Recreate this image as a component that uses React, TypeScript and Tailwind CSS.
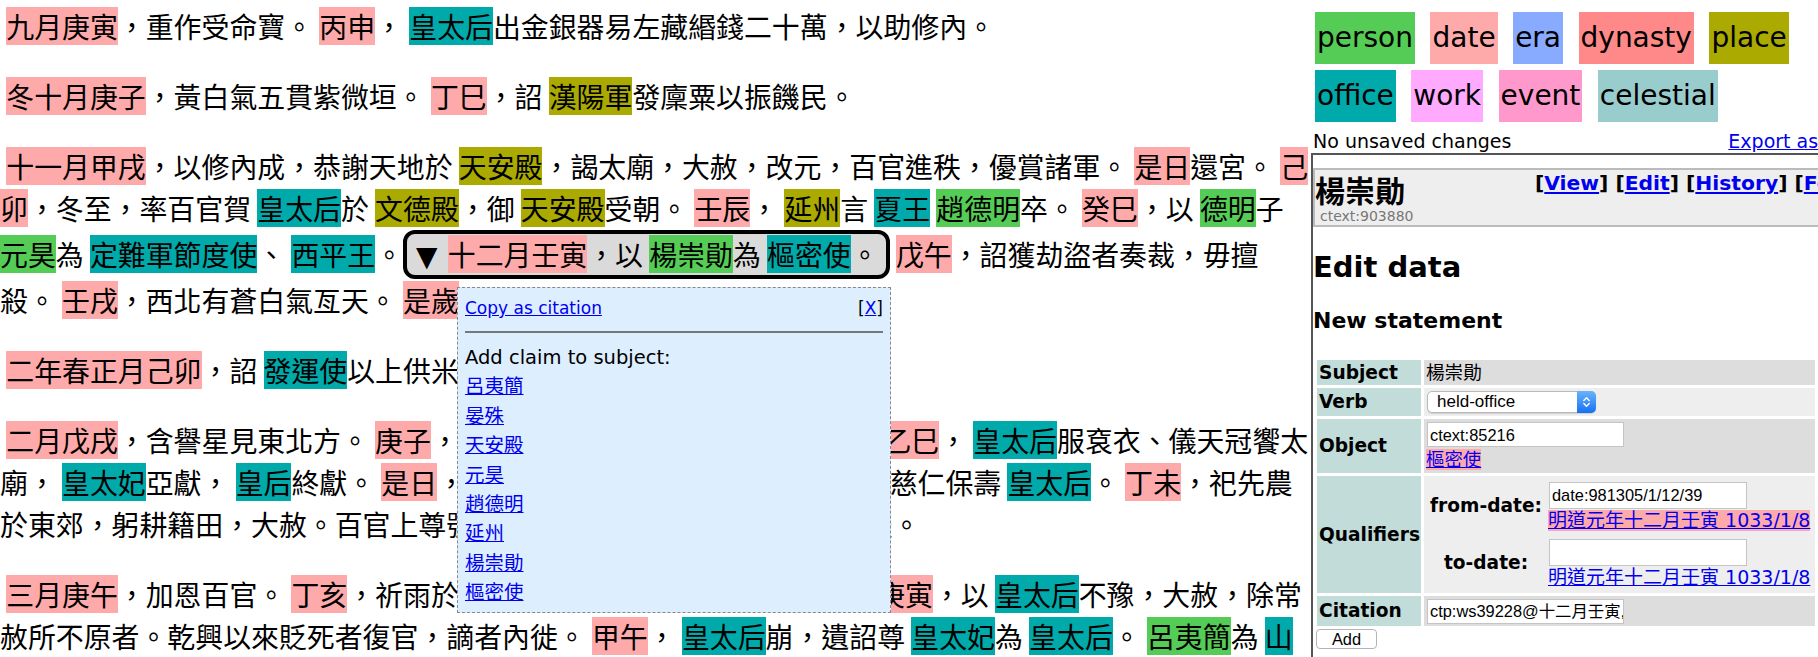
import React from "react";

const BG: Record<string, string> = {
  d: "bg-[#ffaaaa]",
  o: "bg-[#00aaaa]",
  p: "bg-[#55cc55]",
  pl: "bg-[#aaaa00]",
};

function H({ t, children }: { t: string; children: React.ReactNode }) {
  return <span className={"inline-block h-[38px] leading-[38px] " + BG[t]}>{children}</span>;
}

function seg(s: string): React.ReactNode[] {
  const out: React.ReactNode[] = [];
  const re = /\{(\w+):([^}]+)\}/g;
  let last = 0;
  let k = 0;
  let m: RegExpExecArray | null;
  while ((m = re.exec(s))) {
    if (m.index > last) out.push(s.slice(last, m.index));
    out.push(
      <H key={k++} t={m[1]}>
        {m[2]}
      </H>
    );
    last = re.lastIndex;
  }
  if (last < s.length) out.push(s.slice(last));
  return out;
}

function L({ s }: { s: string }) {
  return <div className="h-[42px] leading-[42px] whitespace-pre">{seg(s)}</div>;
}

function P({ children }: { children: React.ReactNode }) {
  return <div className="mb-[28px]">{children}</div>;
}

const LINK = "text-[#0000ee] underline";
const SANS = "font-['Liberation_Sans','Noto_Sans_CJK_TC',sans-serif]";

function Field({ v, w = "w-[197px]", h = "h-[25px]" }: { v: string; w?: string; h?: string }) {
  return (
    <div
      className={
        "ml-[1px] bg-white border border-[#c4c4c4] pl-[2px] overflow-hidden whitespace-nowrap flex items-center text-[16.4px] " +
        SANS +
        " " +
        w +
        " " +
        h
      }
    >
      {v}
    </div>
  );
}

function Tag({ label, bg }: { label: string; bg: string }) {
  return <span className={"h-[52px] px-[2px] leading-[52px] " + bg}>{label}</span>;
}

export default function App() {
  const claims = ["呂夷簡", "晏殊", "天安殿", "元昊", "趙德明", "延州", "楊崇勛", "樞密使"];
  return (
    <div className="flex w-[1818px] h-[657px] overflow-hidden bg-white text-black font-['DejaVu_Sans','Noto_Sans_CJK_TC',sans-serif] text-[19px]">
      {/* Left: text */}
      <div className="relative w-[1311px] shrink-0 overflow-hidden pt-[5px] font-['Noto_Sans_CJK_TC',sans-serif] text-[27.9px]">
        <P>
          <L s=" {d:九月庚寅}，重作受命寶。 {d:丙申}， {o:皇太后}出金銀器易左藏緡錢二十萬，以助修內。" />
        </P>
        <P>
          <L s=" {d:冬十月庚子}，黃白氣五貫紫微垣。 {d:丁巳}，詔 {pl:漢陽軍}發廩粟以振饑民。" />
        </P>
        <P>
          <L s=" {d:十一月甲戌}，以修內成，恭謝天地於 {pl:天安殿}，謁太廟，大赦，改元，百官進秩，優賞諸軍。 {d:是日}還宮。 {d:己}" />
          <L s="{d:卯}，冬至，率百官賀 {o:皇太后}於 {pl:文德殿}，御 {pl:天安殿}受朝。 {d:壬辰}， {pl:延州}言 {o:夏王} {p:趙德明}卒。 {d:癸巳}，以 {p:德明}子" />
          <div className="h-[50px] leading-[50px] whitespace-pre">
            {seg("{p:元昊}為 {o:定難軍節度使}、 {o:西平王}。")}
            <span className="inline-block h-[49px] border-4 border-black rounded-[12px] bg-[#dadada] pl-[9px] pr-[7px] leading-[41px]">
              <span className="font-['DejaVu_Sans',sans-serif] mr-[4px]">▼</span>
              {seg(" {d:十二月壬寅}，以 {p:楊崇勛}為 {o:樞密使}。")}
            </span>
            {seg(" {d:戊午}，詔獲劫盜者奏裁，毋擅")}
          </div>
          <L s="殺。 {d:壬戌}，西北有蒼白氣亙天。 {d:是歲}，京東、淮南饑。" />
        </P>
        <P>
          <L s=" {d:二年春正月己卯}，詔 {o:發運使}以上供米百萬斛賑江、淮饑民。" />
        </P>
        <P>
          <L s=" {d:二月戊戌}，含譽星見東北方。 {d:庚子}，詔奉安太祖神御於景靈宮萬壽殿。 {d:乙巳}， {o:皇太后}服袞衣、儀天冠饗太" />
          <L s="廟， {o:皇太妃}亞獻， {o:皇后}終獻。 {d:是日}，群臣上尊號曰應元齊聖顯功崇德仁 慈仁保壽 {o:皇太后}。 {d:丁未}，祀先農" />
          <L s="於東郊，躬耕籍田，大赦。百官上尊號曰應元崇德仁壽慈聖皇太后冊寶禮。" />
        </P>
        <P>
          <L s=" {d:三月庚午}，加恩百官。 {d:丁亥}，祈雨於大相國寺、會靈觀、上清宮等處。{d:庚寅}，以 {o:皇太后}不豫，大赦，除常" />
          <L s="赦所不原者。乾興以來貶死者復官，謫者內徙。 {d:甲午}， {o:皇太后}崩，遺詔尊 {o:皇太妃}為 {o:皇太后}。 {p:呂夷簡}為 {o:山}" />
        </P>

        {/* Popup */}
        <div className="absolute left-[457px] top-[287px] w-[434px] h-[326px] border border-dashed border-[#888888] bg-[#ddeeff] px-[7px] pt-[6px] font-['DejaVu_Sans','Noto_Sans_CJK_TC',sans-serif] text-[19.5px] leading-[29.4px]">
          <div className="flex justify-between h-[29px] leading-[29px] text-[17px]">
            <a className={LINK}>Copy as citation</a>
            <span>
              [<a className={LINK}>X</a>]
            </span>
          </div>
          <div className="mt-[8px] mb-[10px] h-[2px] bg-[#777777]" />
          <div>Add claim to subject:</div>
          {claims.map((c) => (
            <div key={c}>
              <a className={LINK}>{c}</a>
            </div>
          ))}
        </div>
      </div>

      {/* Right panel */}
      <div className="w-[560px] shrink-0 flex flex-col">
        <div className="pt-[12px] pl-[4px] flex flex-col gap-y-[6px] text-[28px]">
          <div className="flex gap-x-[15.5px]">
            <Tag label="person" bg="bg-[#55cc55]" />
            <Tag label="date" bg="bg-[#ffaaaa]" />
            <Tag label="era" bg="bg-[#88aaff]" />
            <Tag label="dynasty" bg="bg-[#ff8888]" />
            <Tag label="place" bg="bg-[#aaaa00]" />
          </div>
          <div className="flex gap-x-[15.5px]">
            <Tag label="office" bg="bg-[#00aaaa]" />
            <Tag label="work" bg="bg-[#ffaaff]" />
            <Tag label="event" bg="bg-[#ff99cc]" />
            <Tag label="celestial" bg="bg-[#99cccc]" />
          </div>
        </div>
        <div className="mt-[8px] h-[22px] leading-[22px] pl-[2px] flex justify-between whitespace-nowrap">
          <span>No unsaved changes</span>
          <a className={LINK}>Export as JSON</a>
        </div>
        <div className="mt-[1px] flex-1 border-t-2 border-l-2 border-[#555555] pt-[13px]">
          <div className="flex border-2 border-[#bbbbbb] bg-[#eeeeee]">
            <div className="w-[220px] shrink-0">
              <div className="pt-[2px] text-[30px] font-bold leading-[34px] font-['Noto_Sans_CJK_TC',sans-serif]">楊崇勛</div>
              <div className="mt-[2px] pl-[5px] text-[14px] leading-[17px] text-[#777777]">ctext:903880</div>
            </div>
            <div className="pt-[2px] text-[20.3px] font-bold leading-[23px] whitespace-nowrap">
              [<a className={LINK}>View</a>] [<a className={LINK}>Edit</a>] [<a className={LINK}>History</a>] [
              <a className={LINK}>Feedback</a>]
            </div>
          </div>

          <div className="mt-[23px] text-[29px] font-bold leading-[34px]">Edit data</div>
          <div className="mt-[24px] text-[22px] font-bold leading-[26px]">New statement</div>

          <table className="ml-[1px] mt-[23px] w-[504px] table-fixed border-separate border-spacing-[3px] text-[18.6px] leading-[22px]">
            <tbody>
              <tr>
                <td className="w-[104px] h-[25px] bg-[#c1dcd9] font-bold px-[2px]">Subject</td>
                <td className="h-[25px] bg-[#dddddd] px-[2px] leading-[25px]">楊崇勛</td>
              </tr>
              <tr>
                <td className="h-[28px] bg-[#c1dcd9] font-bold px-[2px]">Verb</td>
                <td className="h-[28px] bg-[#eeeeee] px-[2px]">
                  <div className="ml-[1px] w-[169px] h-[22px] rounded-[5px] bg-white border border-[#b9b9b9] shadow-[0_1px_1px_rgba(0,0,0,0.12)] flex items-center">
                    <span className={"pl-[9px] flex-1 text-[17px] leading-[20px] " + SANS}>held-office</span>
                    <span className="w-[19px] h-[22px] -mr-px rounded-r-[5px] bg-linear-to-b from-[#6ab2fb] to-[#0f70f3] flex items-center justify-center">
                      <svg width="9" height="14" viewBox="0 0 9 14" fill="none" stroke="white" strokeWidth="1.4" strokeLinecap="round" strokeLinejoin="round">
                        <path d="M1.8 5.4 L4.5 2.7 L7.2 5.4" />
                        <path d="M1.8 8.6 L4.5 11.3 L7.2 8.6" />
                      </svg>
                    </span>
                  </div>
                </td>
              </tr>
              <tr>
                <td className="h-[54px] bg-[#c1dcd9] font-bold px-[2px]">Object</td>
                <td className="h-[54px] bg-[#dddddd] px-[2px]">
                  <div className="flex flex-col items-start gap-y-[2px]">
                    <Field v="ctext:85216" />
                    <a className={"inline-block h-[21px] leading-[21px] bg-[#ffaaaa] text-[18.4px] " + LINK}>樞密使</a>
                  </div>
                </td>
              </tr>
              <tr>
                <td className="h-[117px] bg-[#c1dcd9] font-bold px-[2px]">Qualifiers</td>
                <td className="h-[117px] bg-[#eeeeee] px-[2px]">
                  <div className="ml-[1px] grid grid-cols-[118px_198px] gap-x-[3px] gap-y-[8px] items-center">
                    <div className="font-bold text-center whitespace-nowrap">from-date:</div>
                    <div className="flex flex-col items-start gap-y-[1px]">
                      <Field v="date:981305/1/12/39" w="w-[198px]" h="h-[27px]" />
                      <a className={"inline-block h-[21px] leading-[21px] whitespace-nowrap bg-[#ffaaaa] text-[19px] " + LINK}>
                        明道元年十二月壬寅 1033/1/8
                      </a>
                    </div>
                    <div className="font-bold text-center whitespace-nowrap">to-date:</div>
                    <div className="flex flex-col items-start gap-y-[1px]">
                      <Field v="" w="w-[198px]" h="h-[27px]" />
                      <a className={"inline-block h-[21px] leading-[21px] whitespace-nowrap text-[19px] " + LINK}>
                        明道元年十二月壬寅 1033/1/8
                      </a>
                    </div>
                  </div>
                </td>
              </tr>
              <tr>
                <td className="h-[30px] bg-[#c1dcd9] font-bold px-[2px]">Citation</td>
                <td className="h-[30px] bg-[#dddddd] px-[2px]">
                  <Field v="ctp:ws39228@十二月壬寅,以楊崇勛為樞密使。" />
                </td>
              </tr>
            </tbody>
          </table>
          <button className={"ml-[3px] block w-[61px] h-[20px] bg-white border border-[#b5b5b5] rounded-[4px] text-[16.4px] leading-[18px] text-center " + SANS}>
            Add
          </button>
        </div>
      </div>
    </div>
  );
}
